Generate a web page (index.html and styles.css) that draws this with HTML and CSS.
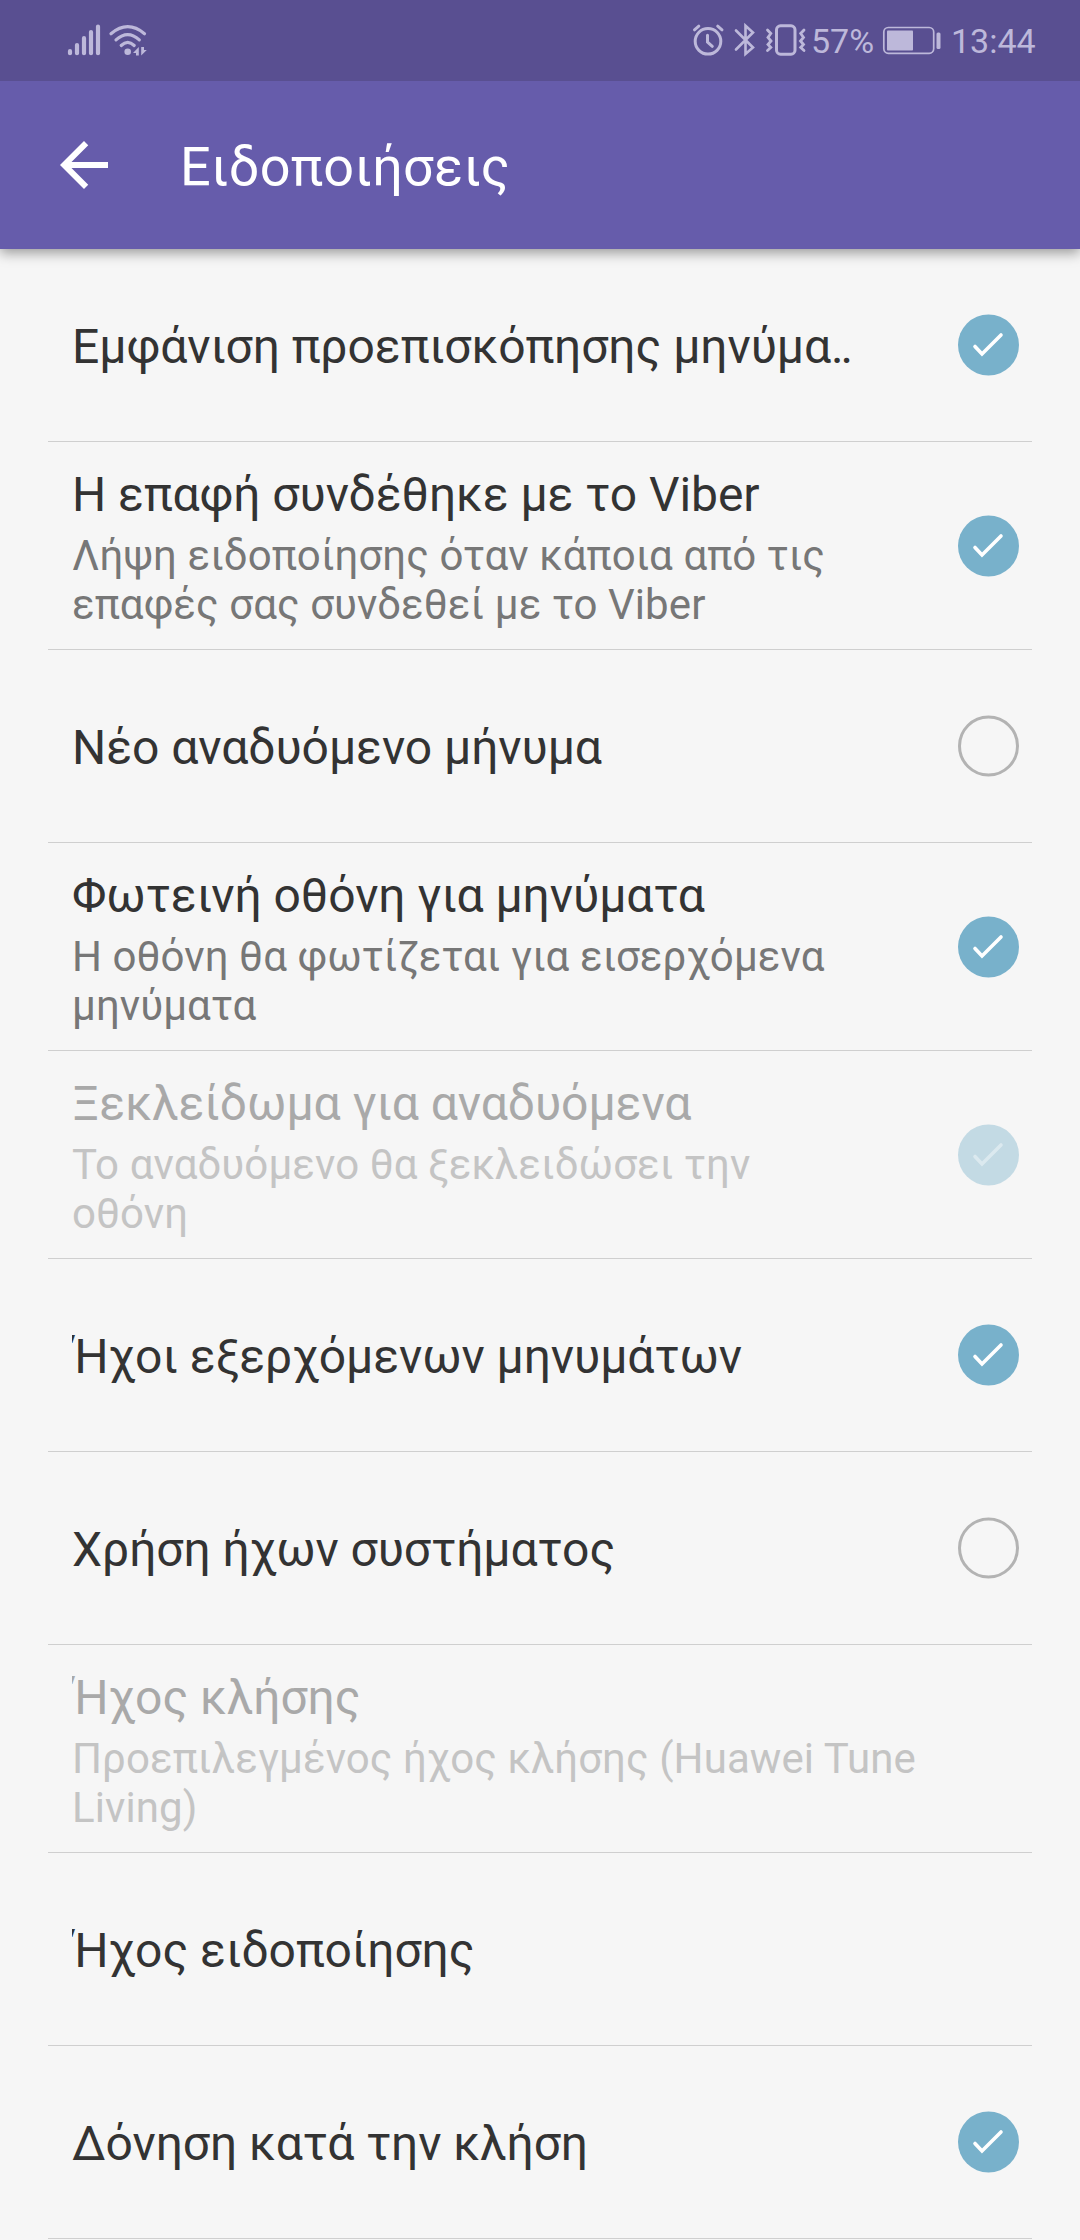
FILE: index.html
```html
<!DOCTYPE html>
<html lang="el">
<head>
<meta charset="utf-8">
<title>Ειδοποιήσεις</title>
<link rel="stylesheet" href="styles.css">
</head>
<body>
<svg class="defs" width="0" height="0" aria-hidden="true">
  <symbol id="check-on" viewBox="0 0 62 62">
    <circle cx="30.500" cy="31" r="30.500" fill="#78b1cb"/>
    <path d="M17 32.500L24 40L43 21" fill="none" stroke="#fff" stroke-width="3.600" stroke-linecap="round" stroke-linejoin="miter"/>
  </symbol>
  <symbol id="check-off" viewBox="0 0 62 62">
    <circle cx="30.500" cy="31" r="29" fill="none" stroke="#b3b3b3" stroke-width="3"/>
  </symbol>
</svg>
<header class="status">
  <svg class="network" width="96" height="81" viewBox="60 0 96 81" fill="none" stroke="currentColor" stroke-linecap="round">
    <path stroke-width="4.2" d="M70 51.2V53.2M77 45V53.2M84 38.2V53.2M91 32V53.2M98 26.5V53.2"/>
    <path stroke-width="3.2" d="M111 33.7Q127.700 19.700 144.500 33.700M116 39.900Q127.700 29.500 139.300 39.900M121.200 45.500Q127.700 39.200 134.200 45.500"/>
    <circle cx="127.700" cy="51.700" r="3.300" fill="currentColor" stroke="none"/>
    <path fill="currentColor" stroke="none" d="M138.800 47V55.500H136V53H133L138.800 47zM141.200 47H144V50H146.800L141.200 55.500z"/>
  </svg>
  <div class="system">
    <svg width="114" height="81" viewBox="692 0 114 81" fill="none" stroke="currentColor" stroke-width="3" stroke-linecap="round">
      <circle cx="708" cy="41.300" r="12.800"/>
      <path d="M707.500 35.200V42L712.300 46.300M694.500 29.800L698.800 26.200M717.700 26.200L722 29.800"/>
      <path stroke-width="2.600" d="M736 30.500L753 47.500L745.500 54V25.700L753 32.500L736 49.500"/>
      <rect x="776.500" y="25.800" width="18.500" height="28.400" rx="4"/>
      <path stroke-width="2.800" d="M767.500 30L770.800 33.500L768 37.500L771 41L768 44.500L770.800 47.500L767.500 50.500M804 30L800.700 33.500L803.500 37.500L800.500 41L803.500 44.500L800.700 47.500L804 50.500"/>
    </svg>
    <span class="percent">57%</span>
    <svg width="60" height="81" viewBox="882 0 60 81" fill="none">
      <rect x="883.800" y="27.500" width="49.900" height="25.800" rx="4.500" stroke="currentColor" stroke-width="1.700"/>
      <rect x="887" y="30.500" width="26" height="20" rx=".8" fill="currentColor"/>
      <rect x="936.500" y="32.500" width="4" height="16.500" rx="1.500" fill="currentColor"/>
    </svg>
    <span class="clock">13:44</span>
  </div>
</header>
<nav class="toolbar">
  <svg width="72" height="72" viewBox="0 0 24 24" fill="#fff"><path d="M20 11H7.830l5.590-5.590L12 4l-8 8 8 8 1.410-1.410L7.830 13H20v-2z"/></svg>
  <h1 class="heading">Ειδοποιήσεις</h1>
</nav>
<main class="list">
  <section class="row">
    <div class="text"><div class="title">Εμφάνιση προεπισκόπησης μηνύμα<span class="dots">..</span></div></div>
    <svg class="toggle"><use href="#check-on"/></svg>
  </section>
  <section class="row detailed">
    <div class="text"><div class="title">Η επαφή συνδέθηκε με το Viber</div>
      <div class="summary">Λήψη ειδοποίησης όταν κάποια από τις επαφές σας συνδεθεί με το Viber</div></div>
    <svg class="toggle"><use href="#check-on"/></svg>
  </section>
  <section class="row">
    <div class="text"><div class="title">Νέο αναδυόμενο μήνυμα</div></div>
    <svg class="toggle"><use href="#check-off"/></svg>
  </section>
  <section class="row detailed">
    <div class="text"><div class="title">Φωτεινή οθόνη για μηνύματα</div>
      <div class="summary">Η οθόνη θα φωτίζεται για εισερχόμενα μηνύματα</div></div>
    <svg class="toggle"><use href="#check-on"/></svg>
  </section>
  <section class="row detailed disabled">
    <div class="text"><div class="title">Ξεκλείδωμα για αναδυόμενα</div>
      <div class="summary">Το αναδυόμενο θα ξεκλειδώσει την οθόνη</div></div>
    <svg class="toggle"><use href="#check-on"/></svg>
  </section>
  <section class="row">
    <div class="text"><div class="title">Ήχοι εξερχόμενων μηνυμάτων</div></div>
    <svg class="toggle"><use href="#check-on"/></svg>
  </section>
  <section class="row">
    <div class="text"><div class="title">Χρήση ήχων συστήματος</div></div>
    <svg class="toggle"><use href="#check-off"/></svg>
  </section>
  <section class="row detailed disabled">
    <div class="text"><div class="title">Ήχος κλήσης</div>
      <div class="summary">Προεπιλεγμένος ήχος κλήσης (Huawei Tune Living)</div></div>
  </section>
  <section class="row">
    <div class="text"><div class="title">Ήχος ειδοποίησης</div></div>
  </section>
  <section class="row">
    <div class="text"><div class="title">Δόνηση κατά την κλήση</div></div>
    <svg class="toggle"><use href="#check-on"/></svg>
  </section>
</main>
</body>
</html>
```

FILE: styles.css
```css
* { box-sizing: border-box; }

body {
  margin: 0;
  height: 2240px;
  overflow: hidden;
  background: #f6f6f6;
  font-family: Roboto, sans-serif;
  color: #333;
}

svg { display: block; flex: none; }
.defs { position: absolute; }

/* Stacked above the toolbar so its shadow only falls downwards */
.status {
  position: relative;
  z-index: 1;
  display: flex;
  justify-content: space-between;
  height: 81px;
  padding: 0 45px 0 60px;
  background: #594f91;
  color: #bdb8da;
  font-size: 34px;
  line-height: 82px;
  white-space: nowrap;
}

.system { display: flex; }
.percent { width: 71px; margin-left: 5px; }
.clock { width: 84px; margin-left: 9px; }

.toolbar {
  display: flex;
  align-items: center;
  gap: 60px;
  height: 168px;
  padding-left: 48px;
  background: #665cab;
  box-shadow: 0 4px 12px rgba(0, 0, 0, .38);
}

.heading {
  margin: 0;
  padding-top: 4px;
  color: #fff;
  font-size: 54px;
  font-weight: 400;
  line-height: 64px;
  letter-spacing: .3px;
}

.list { margin: 0 48px; }

.row {
  display: flex;
  align-items: center;
  height: 193px;
  padding: 0 12px 0 24px;
  border-bottom: 1px solid #cfcfcf;
}
.row.detailed { height: 208px; }

.text {
  flex: 1;
  min-width: 0;
}
.text:not(:last-child) { margin-right: 90px; }

.title {
  padding-top: 4px;
  overflow-x: clip;
  font-size: 48px;
  line-height: 56px;
  letter-spacing: -.05px;
  white-space: nowrap;
}

.dots { letter-spacing: -3.2px; }

.summary {
  margin-top: 8px;
  color: #777;
  font-size: 42px;
  line-height: 49px;
  letter-spacing: .08px;
}

.toggle {
  width: 62px;
  height: 62px;
}

.disabled .title { color: #a9a9a9; }
.disabled .summary { color: #c4c4c4; }
.disabled .toggle { fill-opacity: .4; stroke-opacity: .4; }
```
